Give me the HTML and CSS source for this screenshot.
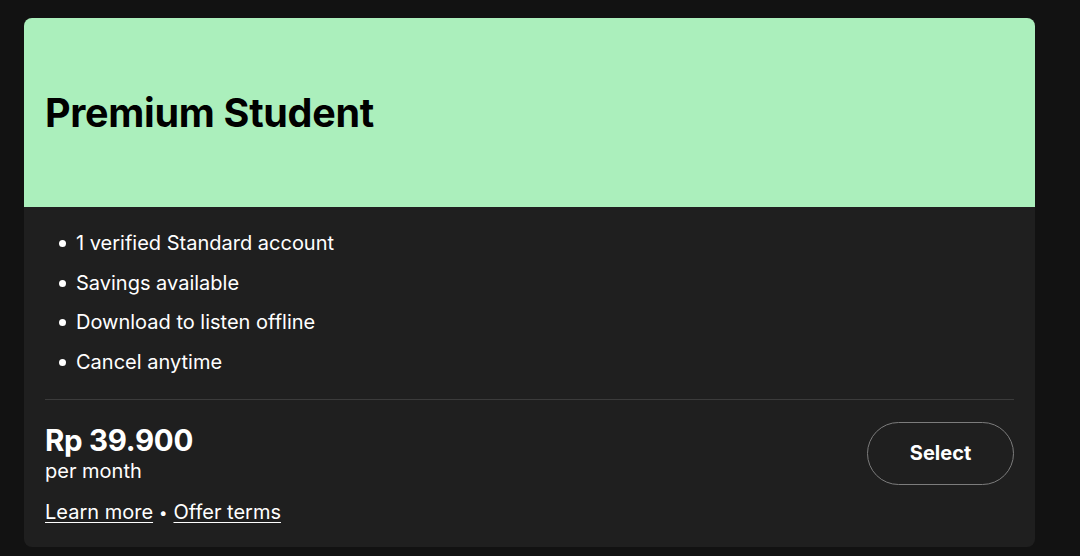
FILE: index.html
```html
<!DOCTYPE html>
<html lang="en">
<head>
<meta charset="utf-8">
<title>Premium Student</title>
<link rel="stylesheet" href="styles.css">
</head>
<body>
<div class="card">
  <div class="card-header">
    <h1 class="title">Premium Student</h1>
  </div>
  <div class="card-body">
    <ul class="features">
      <li>1 verified Standard account</li>
      <li>Savings available</li>
      <li>Download to listen offline</li>
      <li>Cancel anytime</li>
    </ul>
    <hr class="divider">
    <div class="footer">
      <div class="pricing">
        <div class="price">Rp 39.900</div>
        <div class="period">per month</div>
        <div class="links"><a href="#">Learn more</a><span class="dot">•</span><a href="#">Offer terms</a></div>
      </div>
      <button class="select">Select</button>
    </div>
  </div>
</div>
</body>
</html>
```

FILE: styles.css
```css
* { box-sizing: border-box; }
html, body { margin: 0; padding: 0; }
body {
  background: #121212;
  font-family: Inter, "Noto Sans", sans-serif;
  color: #fff;
  width: 1080px;
  height: 556px;
  overflow: hidden;
}
.card {
  margin: 18px 0 0 24px;
  width: 1011px;
  height: 529px;
  background: #1f1f1f;
  border-radius: 8px;
  overflow: hidden;
  display: flex;
  flex-direction: column;
}
.card-header {
  background: #abefbc;
  height: 189px;
  padding: 0 21px;
  display: flex;
  align-items: center;
}
.title {
  margin: 0;
  color: #000;
  font-size: 39.5px;
  font-weight: 700;
  letter-spacing: -0.3px;
}
.card-body {
  padding: 24px 21px 0 21px;
}
.features {
  margin: 0;
  padding: 0 0 0 31px;
  list-style: none;
  display: flex;
  flex-direction: column;
  gap: 15.5px;
}
.features li {
  position: relative;
  font-size: 20px;
  line-height: 24px;
}
.features li::before {
  content: "";
  position: absolute;
  left: -17px;
  top: 9px;
  width: 7px;
  height: 7px;
  border-radius: 50%;
  background: #fff;
}
.divider {
  border: 0;
  height: 1px;
  background: #3b3b3b;
  margin: 25px 0 0 0;
}
.footer {
  display: flex;
  justify-content: space-between;
  align-items: center;
  padding-top: 24px;
}
.price {
  font-size: 29.5px;
  font-weight: 700;
  line-height: 32px;
  letter-spacing: -0.3px;
}
.period {
  font-size: 20px;
  line-height: 26px;
  margin-top: 2px;
}
.links {
  margin-top: 16px;
  font-size: 20px;
  line-height: 24px;
}
.links a {
  color: #fff;
  text-decoration: underline;
  text-underline-offset: 3px;
  text-decoration-thickness: 1px;
}
.dot { margin: 0 6px; font-size: 15px; vertical-align: 1px; }
.select {
  width: 147px;
  height: 63px;
  border-radius: 32px;
  border: 1px solid #7c7c7c;
  background: transparent;
  color: #fff;
  font-family: inherit;
  font-size: 20px;
  font-weight: 700;
  margin-top: -42px;
}
```
